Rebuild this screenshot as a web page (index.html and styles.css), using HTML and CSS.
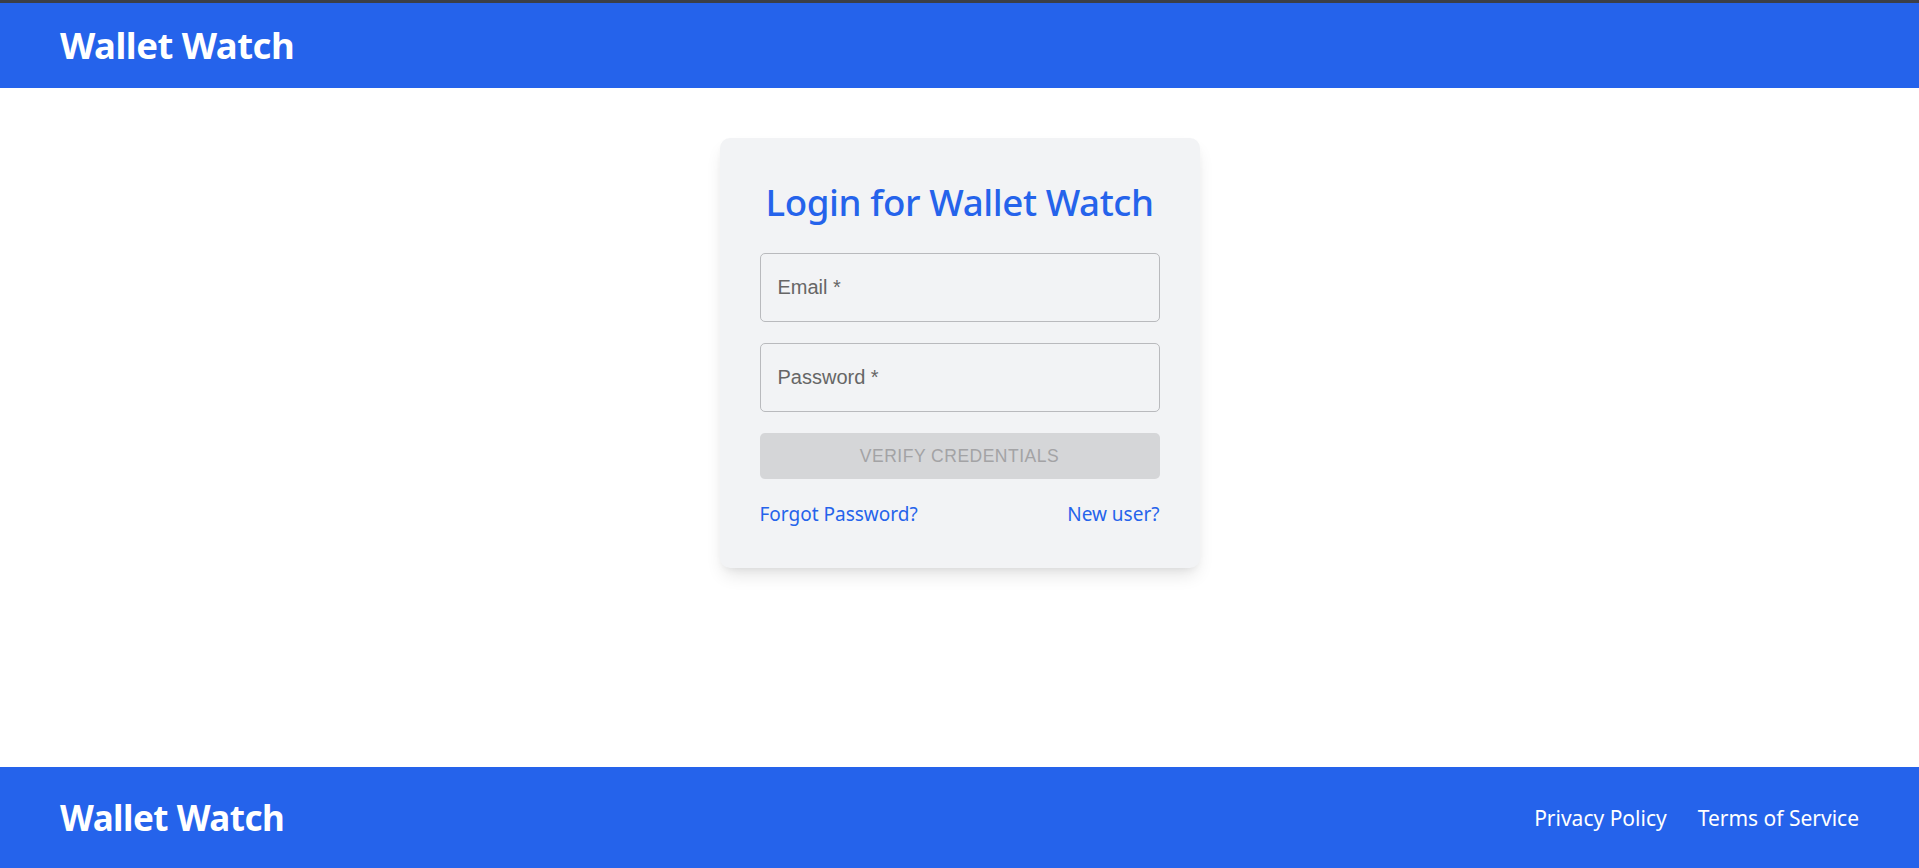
FILE: index.html
```html
<!DOCTYPE html>
<html lang="en">
<head>
<meta charset="utf-8">
<title>Wallet Watch - Login</title>
<link rel="stylesheet" href="styles.css">
</head>
<body>
<div class="page">
  <header class="header">
    <div class="brand">Wallet Watch</div>
  </header>
  <main class="main">
    <form class="card">
      <h1 class="title">Login for Wallet Watch</h1>
      <div class="field"><span class="label">Email *</span></div>
      <div class="field"><span class="label">Password *</span></div>
      <button type="button" class="btn" disabled>VERIFY CREDENTIALS</button>
      <div class="links">
        <a class="link" href="#">Forgot Password?</a>
        <a class="link" href="#">New user?</a>
      </div>
    </form>
  </main>
  <footer class="footer">
    <div class="brand brand-foot">Wallet Watch</div>
    <nav class="foot-nav">
      <a class="foot-link" href="#">Privacy Policy</a>
      <a class="foot-link" href="#">Terms of Service</a>
    </nav>
  </footer>
</div>
</body>
</html>
```
FILE: styles.css
```css
* { box-sizing: border-box; }
html, body { margin: 0; padding: 0; }
body {
  font-family: "Noto Sans", "Open Sans", sans-serif;
  background: #ffffff;
}
.page {
  height: 868px;
  display: flex;
  flex-direction: column;
}
.header {
  height: 88px;
  flex-shrink: 0;
  border-top: 3px solid #3b3f47;
  background: #2563eb;
  display: flex;
  align-items: center;
  padding: 0 60px;
}
.brand {
  color: #ffffff;
  font-weight: 700;
  font-size: 36.5px;
  letter-spacing: -0.5px;
  line-height: 1;
}
.brand-foot { font-size: 35px; }
.main {
  flex: 1;
  display: flex;
  justify-content: center;
  align-items: flex-start;
  padding-top: 50px;
}
.card {
  width: 480px;
  background: #f2f3f5;
  border-radius: 10px;
  padding: 36px 40px 41px;
  box-shadow: 0 10px 18px -4px rgba(0,0,0,0.12), 0 4px 8px -4px rgba(0,0,0,0.08);
  display: flex;
  flex-direction: column;
}
.title {
  margin: 0 0 23px;
  text-align: center;
  white-space: nowrap;
  color: #2563eb;
  font-weight: 500;
  font-size: 36.7px;
  line-height: 56px;
  letter-spacing: -0.4px;
}
.field {
  height: 69px;
  flex-shrink: 0;
  border: 1px solid #b9babd;
  border-radius: 5px;
  display: flex;
  align-items: center;
  padding: 0 17px;
  margin-bottom: 21px;
}
.label {
  font-family: "Liberation Sans", Arial, sans-serif;
  font-size: 20px;
  color: #666666;
}
.btn {
  height: 46px;
  flex-shrink: 0;
  border: none;
  border-radius: 5px;
  background: #d5d6d8;
  color: #a3a3a5;
  font-family: "Liberation Sans", Arial, sans-serif;
  font-size: 17.5px;
  letter-spacing: 0.5px;
  padding: 0;
}
.links {
  display: flex;
  justify-content: space-between;
  margin-top: 22px;
}
.link {
  color: #2563eb;
  text-decoration: none;
  font-size: 19px;
  line-height: 26px;
}
.footer {
  height: 101px;
  flex-shrink: 0;
  background: #2563eb;
  display: flex;
  align-items: center;
  justify-content: space-between;
  padding: 0 60px;
}
.foot-nav {
  display: flex;
  gap: 31px;
}
.foot-link {
  color: #ffffff;
  text-decoration: none;
  font-size: 21px;
}
```
